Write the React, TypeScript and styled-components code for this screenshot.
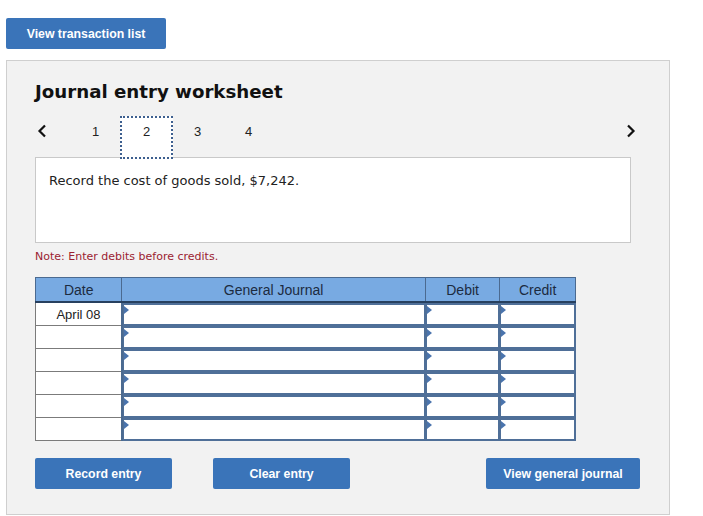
import styled, { createGlobalStyle } from "styled-components";

const GlobalStyle = createGlobalStyle`
  html, body {
    margin: 0;
    padding: 0;
    background: #ffffff;
  }
`;

const Page = styled.div`
  width: 703px;
  height: 516px;
  padding: 18px 0 0 6px;
  box-sizing: border-box;
  overflow: hidden;
`;

const BlueButton = styled.button<{ $width: number }>`
  width: ${(p) => p.$width}px;
  height: 31px;
  background: #3a74b9;
  color: #ffffff;
  border: none;
  border-radius: 2px;
  font-family: "Liberation Sans", Arial, sans-serif;
  font-weight: bold;
  font-size: 12.3px;
  cursor: pointer;
  padding: 0;
`;

const Panel = styled.div`
  margin-top: 11px;
  width: 664px;
  height: 455px;
  box-sizing: border-box;
  background: #f2f2f2;
  border: 1px solid #cfcfcf;
  padding: 19px 0 0 28px;
`;

const Title = styled.h2`
  margin: 0;
  font-family: "DejaVu Sans", Verdana, sans-serif;
  font-weight: bold;
  font-size: 18.2px;
  color: #111;
  height: 24px;
  line-height: 24px;
`;

const Nav = styled.div`
  display: flex;
  align-items: flex-start;
  margin-top: 12px;
  width: 603px;
  height: 43px;
  font-family: "Liberation Sans", Arial, sans-serif;
  font-size: 13px;
  color: #222;
`;

const Arrow = styled.span`
  display: flex;
  width: 14px;
  margin-top: 8px;
  justify-content: center;
`;

const Tab = styled.span<{ $active?: boolean }>`
  width: 51px;
  height: 43px;
  box-sizing: border-box;
  padding-top: 6px;
  line-height: 16px;
  text-align: center;
  background: ${(p) => (p.$active ? "#ffffff" : "transparent")};
  border: 2px dotted ${(p) => (p.$active ? "#3d5f8f" : "transparent")};
  margin: ${(p) => (p.$active ? "0 -1px" : "0")};
  position: relative;
  z-index: 1;
  ${(p) => (p.$active ? "width: 53px;" : "")}
`;

const Spacer = styled.span`
  flex: 1;
`;

const Prompt = styled.div`
  width: 596px;
  height: 86px;
  box-sizing: border-box;
  background: #ffffff;
  border: 1px solid #c9c9c9;
  padding: 15px 0 0 13px;
  font-family: "DejaVu Sans", Verdana, sans-serif;
  font-size: 13px;
  color: #222;
  margin-top: -2px;
`;

const Note = styled.div`
  margin-top: 7px;
  font-family: "DejaVu Sans", Verdana, sans-serif;
  font-size: 11px;
  color: #9b2231;
`;

const Table = styled.table`
  margin-top: 14px;
  border-collapse: collapse;
  width: 541px;
  font-family: "Liberation Sans", Arial, sans-serif;
  font-size: 13px;
`;

const Th = styled.th<{ $w: number }>`
  width: ${(p) => p.$w}px;
  height: 23px;
  padding: 0;
  background: #78aae2;
  border: 1px solid #4b6a90;
  border-bottom: 2px solid #27405f;
  color: #1c2b3f;
  font-weight: normal;
  font-size: 14px;
  text-align: center;
`;

const DateCell = styled.td`
  height: 22px;
  padding: 0;
  background: #ffffff;
  border: 1px solid #7b7b7b;
  border-right: 2px solid #4b6a90;
  text-align: center;
  color: #222;
`;

const InputCell = styled.td`
  padding: 0;
  height: 22px;
  border: 1px solid #4f6f98;
  background: #4f6f98;
`;

const InputBox = styled.div`
  position: relative;
  height: 19px;
  margin: 1px 0 1px 1px;
  background: #ffffff;
  border-right: 1px solid #4f6f98;
`;

const Marker = styled.span`
  position: absolute;
  left: 0;
  top: 1px;
  width: 0;
  height: 0;
  border-top: 4px solid transparent;
  border-bottom: 4px solid transparent;
  border-left: 5px solid #4a74ad;
`;

const Actions = styled.div`
  display: flex;
  margin-top: 17px;
  width: 606px;
  gap: 41px;
`;

const Chevron = ({ dir }: { dir: "left" | "right" }) => (
  <svg width="10" height="14" viewBox="0 0 10 14">
    <path
      d={dir === "left" ? "M8 1.5 L2.5 7 L8 12.5" : "M2 1.5 L7.5 7 L2 12.5"}
      fill="none"
      stroke="#111"
      strokeWidth="2.2"
    />
  </svg>
);

const rows = ["April 08", "", "", "", "", ""];

const JournalInput = () => (
  <InputCell>
    <InputBox>
      <Marker />
    </InputBox>
  </InputCell>
);

export default function App() {
  return (
    <>
      <GlobalStyle />
      <Page>
        <BlueButton $width={160}>View transaction list</BlueButton>
        <Panel>
          <Title>Journal entry worksheet</Title>
          <Nav>
            <Arrow>
              <Chevron dir="left" />
            </Arrow>
            <Tab style={{ marginLeft: 21 }}>1</Tab>
            <Tab $active>2</Tab>
            <Tab>3</Tab>
            <Tab>4</Tab>
            <Spacer />
            <Arrow>
              <Chevron dir="right" />
            </Arrow>
          </Nav>
          <Prompt>Record the cost of goods sold, $7,242.</Prompt>
          <Note>Note: Enter debits before credits.</Note>
          <Table>
            <thead>
              <tr>
                <Th $w={86}>Date</Th>
                <Th $w={305}>General Journal</Th>
                <Th $w={74}>Debit</Th>
                <Th $w={75}>Credit</Th>
              </tr>
            </thead>
            <tbody>
              {rows.map((d, i) => (
                <tr key={i}>
                  <DateCell>{d}</DateCell>
                  <JournalInput />
                  <JournalInput />
                  <JournalInput />
                </tr>
              ))}
            </tbody>
          </Table>
          <Actions>
            <BlueButton $width={137}>Record entry</BlueButton>
            <BlueButton $width={137}>Clear entry</BlueButton>
            <BlueButton $width={154} style={{ marginLeft: 95 }}>
              View general journal
            </BlueButton>
          </Actions>
        </Panel>
      </Page>
    </>
  );
}
